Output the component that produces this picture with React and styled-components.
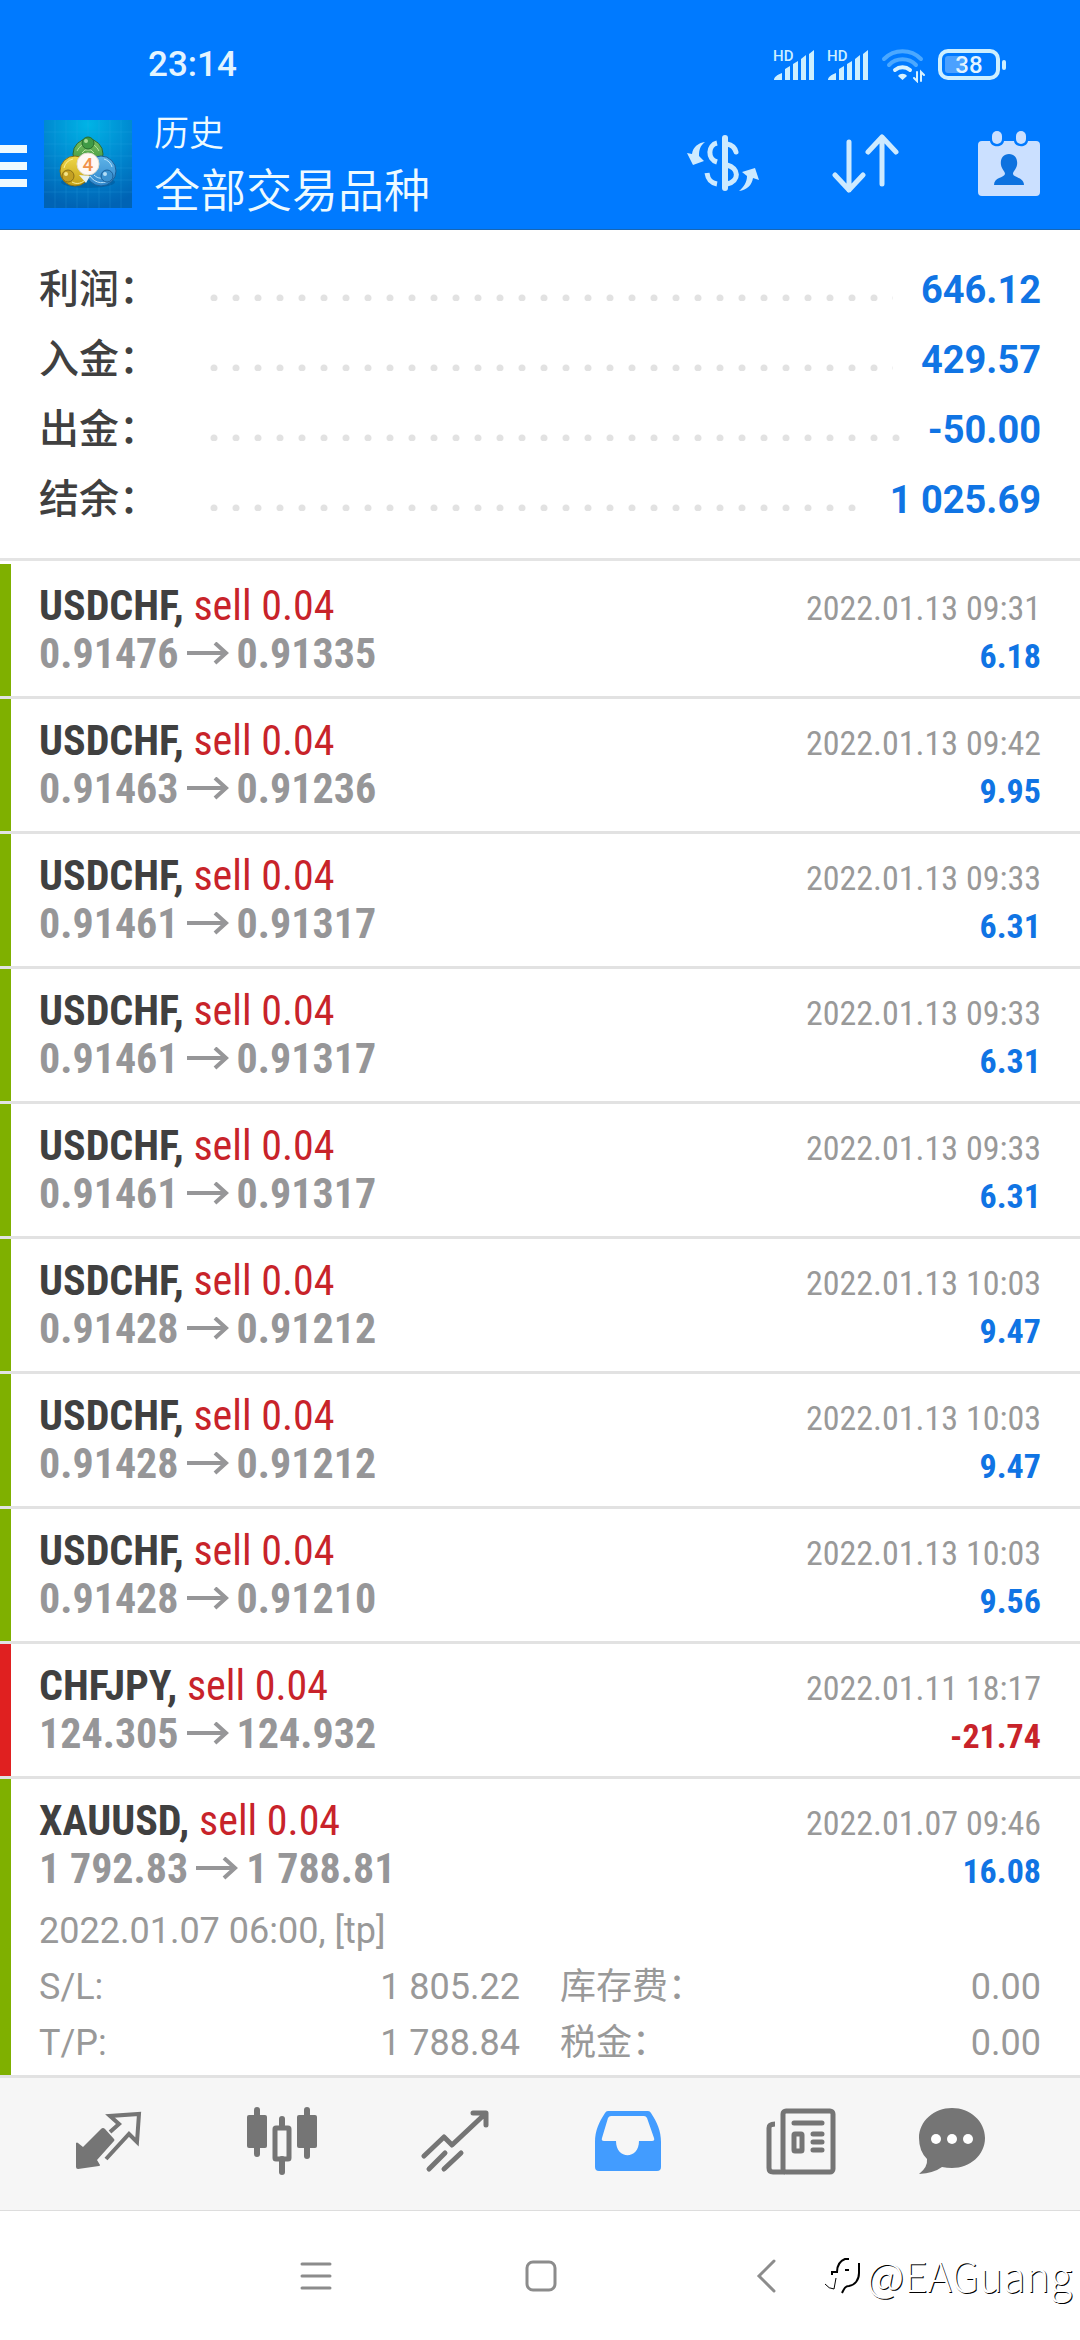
import React from "react";
import styled, { createGlobalStyle } from "styled-components";

const GlobalStyle = createGlobalStyle`
  * { box-sizing: border-box; }
  body {
    margin: 0;
    background: #ffffff;
    font-family: Roboto, "Noto Sans CJK SC", sans-serif;
    color: #404040;
  }
  button {
    border: 0;
    padding: 0;
    margin: 0;
    background: none;
    color: inherit;
    font: inherit;
    cursor: pointer;
  }
  svg { display: block; flex: none; }
  ul, dl, dd, dt, h1, p { margin: 0; padding: 0; }
  ul { list-style: none; }
`;

const condensed = `"Roboto Condensed", Roboto, sans-serif`;

const Page = styled.div`
  display: flex;
  flex-direction: column;
  width: 100%;
  background: #fff;
`;

/* ---------- header ---------- */

const Header = styled.header`
  background: #007aff;
  color: #eefaff;
  border-bottom: 1px solid #1766b5;
`;

const StatusBar = styled.div`
  display: flex;
  align-items: center;
  justify-content: space-between;
  height: 90px;
  padding: 40px 74px 0 148px;
`;

const Clock = styled.time`
  font-size: 35px;
  font-weight: 500;
  line-height: 50px;
  color: #e3f4ff;
`;

const StatusIcons = styled.div`
  display: flex;
  align-items: center;
  gap: 12px;
`;

const Toolbar = styled.div`
  display: flex;
  align-items: center;
  height: 139px;
  padding-top: 9px;
`;

const MenuButton = styled.button`
  width: 28px;
  margin-right: 16px;
`;

const Titles = styled.div`
  flex: 1;
  padding: 6px 0 0 22px;
`;

const Subtitle = styled.p`
  font-size: 35px;
  font-weight: 350;
  line-height: 48px;
`;

const Title = styled.h1`
  font-size: 46px;
  font-weight: 350;
  line-height: 64px;
`;

const ToolButton = styled.button`
  display: flex;
  justify-content: center;
  width: 143px;
  color: #cce6ff;
`;

/* ---------- summary ---------- */

const Summary = styled.dl`
  padding: 25px 39px 23px;
  border-bottom: 3px solid #e4e4e4;
`;

const SummaryRow = styled.div`
  display: flex;
  align-items: center;
  height: 70px;
`;

const SummaryLabel = styled.dt`
  width: 171px;
  font-size: 40px;
  font-weight: 500;
  line-height: 70px;
`;

const Leader = styled.span`
  flex: 1;
  height: 7px;
  margin: 15px 28px 0 0;
  background: radial-gradient(circle at 4px 4px, #e2e2e2 3px, transparent 4px) 0 0 / 22px 7px repeat-x;
`;

const SummaryValue = styled.dd`
  font-size: 38px;
  font-weight: 700;
  color: #1074e4;
`;

/* ---------- deals ---------- */

const Deals = styled.ul`
  padding-top: 3px;
`;

const Deal = styled.li`
  display: flex;
  border-bottom: 3px solid #e2e2e2;
  &::before {
    content: "";
    width: 11px;
    background: ${(p) => (p.$loss ? "#e02020" : "#7fb000")};
  }
`;

const DealBody = styled.div`
  flex: 1;
  padding: 18px 39px ${(p) => (p.$open ? 4 : 16)}px 28px;
`;

const DealTop = styled.div`
  display: flex;
  justify-content: space-between;
  font-family: ${condensed};
  line-height: 48px;
`;

const DealLine = styled.div`
  display: flex;
  align-items: center;
  gap: 8px;
  height: 48px;
  font-size: 42px;
  font-weight: 700;
  white-space: pre;
  color: ${(p) => (p.$muted ? "#969698" : "#404040")};
`;

const Side = styled.span`
  font-weight: 400;
  color: #c8232a;
`;

const DealRight = styled.div`
  padding-top: 2px;
  text-align: right;
  font-size: 34px;
`;

const DealDate = styled.div`
  color: #999999;
`;

const Profit = styled.div`
  font-weight: 700;
  color: ${(p) => (p.$loss ? "#c8232a" : "#1074e4")};
`;

const Details = styled.div`
  padding-top: 8px;
  font-size: 36px;
  font-weight: 400;
  line-height: 56px;
  color: #999999;
`;

const DetailGrid = styled.dl`
  display: grid;
  grid-template-columns: 1fr 1fr;
  column-gap: 40px;
`;

const DetailRow = styled.div`
  display: flex;
  justify-content: space-between;
  height: 56px;
`;

/* ---------- bottom bars ---------- */

const TabBar = styled.nav`
  display: grid;
  grid-template-columns: repeat(5, 173fr) 130fr;
  align-items: center;
  height: 133px;
  padding: 0 63px 6px 22px;
  background: #f6f6f6;
  border-bottom: 1px solid #dddddd;
`;

const Tab = styled.button`
  display: flex;
  justify-content: center;
  color: ${(p) => (p.$active ? "#429cff" : "#757575")};
`;

const SystemBar = styled.div`
  position: relative;
  display: flex;
  align-items: center;
  justify-content: center;
  gap: 193px;
  height: 129px;
  padding-left: 2px;
  color: #8c8c8c;
`;

const Watermark = styled.div`
  position: absolute;
  right: 8px;
  bottom: 36px;
  display: flex;
  align-items: center;
  gap: 6px;
  font-family: Roboto, "Noto Sans CJK SC", sans-serif;
  font-family: "Noto Sans CJK SC", sans-serif;
  font-size: 41px;
  font-weight: 300;
  line-height: 60px;
  color: #ffffff;
  text-shadow: 1px 1px 0 #000000;
`;

/* ---------- drawings ---------- */

const Signal = () => (
  <svg width="42" height="44" viewBox="0 -5 42 44" fill="#cdefff">
    <text x="0" y="13" fontFamily="Roboto, sans-serif" fontSize="15" fontWeight="500">HD</text>
    <path d="M1 32c0-3 3-5 8-7v7zM12 21l5-3v14h-5zM20 16l5-3v19h-5zM28 11l5-4v25h-5zM36 6l5-4v30h-5z" />
  </svg>
);

const Wifi = () => (
  <svg width="44" height="36" viewBox="0 0 44 36" fill="none" strokeLinecap="round">
    <path d="M3 12a26 26 0 0 1 37 0" stroke="#4ba8ff" strokeWidth="4" />
    <path d="M8 18a19 19 0 0 1 27 0" stroke="#4ba8ff" strokeWidth="4" />
    <path d="M14 23a12 12 0 0 1 15 0" stroke="#d8f2ff" strokeWidth="4" />
    <path d="M17 29c2-3 7-3 9 0l-4.500 4z" fill="#d8f2ff" />
    <path d="M36 25v9l-3-3M40 34v-9l3 3" stroke="#d8f2ff" strokeWidth="2" />
  </svg>
);

const Battery = () => (
  <svg width="69" height="34" viewBox="0 0 69 34">
    <rect x="3" y="3" width="58" height="27" rx="8" fill="none" stroke="#cdefff" strokeWidth="4" />
    <rect x="8" y="8" width="19" height="17" rx="3" fill="#4ba1ff" />
    <rect x="65" y="12" width="4" height="10" rx="2" fill="#cdefff" />
    <text x="32" y="25" textAnchor="middle" fontFamily="Roboto, sans-serif" fontSize="24" fontWeight="500" fill="#e3f4ff">38</text>
  </svg>
);

const MenuBars = () => (
  <svg width="28" height="48" viewBox="0 0 28 48" fill="currentColor">
    <path d="M0 5h27v8H0zM0 22h27v8H0zM0 39h27v8H0z" />
  </svg>
);

const AppLogo = () => (
  <svg width="88" height="88" viewBox="0 0 88 88">
    <defs>
      <radialGradient id="sky" cx="50%" cy="5%" r="95%">
        <stop offset="0" stopColor="#00b4e6" />
        <stop offset="0.550" stopColor="#0087cf" />
        <stop offset="1" stopColor="#0063b4" />
      </radialGradient>
      <linearGradient id="leaf" x1="0" y1="0" x2="0" y2="1">
        <stop offset="0" stopColor="#7cc262" />
        <stop offset="1" stopColor="#2f8a35" />
      </linearGradient>
      <linearGradient id="gold" x1="0" y1="0" x2="0" y2="1">
        <stop offset="0" stopColor="#f0d848" />
        <stop offset="1" stopColor="#c4a016" />
      </linearGradient>
      <linearGradient id="azure" x1="0" y1="0" x2="0" y2="1">
        <stop offset="0" stopColor="#5fb4e8" />
        <stop offset="1" stopColor="#2f86cb" />
      </linearGradient>
    </defs>
    <rect width="88" height="88" fill="url(#sky)" />
    <path d="M11 0v88M22 0v88M33 0v88M44 0v88M55 0v88M66 0v88M77 0v88M0 12h88M0 24h88M0 36h88M0 48h88M0 60h88M0 72h88" stroke="#30b0e8" strokeOpacity="0.200" />
    <ellipse cx="44" cy="62" rx="27" ry="6" fill="#004a88" opacity="0.400" />
    <circle cx="44" cy="34" r="15" fill="url(#leaf)" stroke="#2b6a30" />
    <path d="M33 31a12 12 0 0 1 22 0M38 33l3-3h6l3 3" fill="none" stroke="#b4e29c" strokeWidth="1" />
    <circle cx="57" cy="51" r="15" fill="url(#azure)" stroke="#1b5f98" />
    <path d="M46 56c5 8 16 9 21 2M60 39a12 12 0 0 1 8 8M50 55c4 4 9 4 12 1" fill="none" stroke="#b9e2fa" strokeWidth="1" />
    <circle cx="31" cy="51" r="15" fill="url(#gold)" stroke="#86701a" />
    <path d="M20 48a12 12 0 0 1 9-9M28 62c5 3 11 1 14-3" fill="none" stroke="#fbf09a" strokeWidth="1" />
    <path d="M35 55l7 8 4-7z" fill="#e9f3f4" />
    <circle cx="44" cy="23" r="6" fill="#3f9a45" stroke="#286b2c" />
    <circle cx="42" cy="21" r="2" fill="#a7dc96" />
    <circle cx="24" cy="56" r="6" fill="#c3a023" stroke="#8a7018" />
    <circle cx="22" cy="54" r="2" fill="#f5e58a" />
    <circle cx="63" cy="56" r="6" fill="#3b92d0" stroke="#1b609a" />
    <circle cx="61" cy="54" r="2" fill="#b5def6" />
    <circle cx="44" cy="44" r="11" fill="#fff8f4" stroke="#e0dcd0" />
    <text x="44" y="51" textAnchor="middle" fontFamily="Roboto, sans-serif" fontSize="19" fontWeight="500" fill="#f0924a">4</text>
  </svg>
);

const CurrencyIcon = () => (
  <svg width="74" height="58" viewBox="0 0 74 58" fill="none" stroke="#cdeaff" strokeWidth="5">
    <path d="M39 3v50" strokeWidth="6" strokeLinecap="round" />
    <path d="M31 8c-9 2-10 16 0 19" />
    <path d="M21 38c1 7 4 10 10 11" />
    <path d="M41 9c5 1 8 4 9 8" strokeLinecap="round" />
    <path d="M41 30c12 3 13 16 0 19" />
    <path d="M19 7C12 8 7 12 6 19l-5-1 6 12 11-4-5-5c0-6 1-10 6-14z" fill="#cdeaff" stroke="none" />
    <path d="M53 56c8-1 13-6 14-13l6 2-4-12-13 4 5 4c0 6-3 11-8 15z" fill="#cdeaff" stroke="none" />
  </svg>
);

const SortIcon = () => (
  <svg width="68" height="60" viewBox="0 0 68 60" fill="none" stroke="#cdeaff" strokeWidth="5" strokeLinecap="round" strokeLinejoin="round">
    <path d="M17 8v48M3 41l14 15 14-15" />
    <path d="M50 50V3M36 18L50 3l14 15" />
  </svg>
);

const CalendarIcon = () => (
  <svg width="64" height="68" viewBox="0 0 64 68" fill="#cbe0ff">
    <path d="M5 11h8c1 7 13 7 14 0h10c1 7 13 7 14 0h8q4 0 4 4v47q0 4-4 4H5q-4 0-4-4V15q0-4 4-4z" />
    <rect x="15" y="1" width="10" height="13" rx="5" />
    <rect x="39" y="1" width="10" height="13" rx="5" />
    <path fill="#0d72df" d="M32 24c6 0 9 5 8 11-1 5-4 6-4 9 1 4 11 3 11 11H17c0-8 10-7 11-11 0-3-3-4-4-9-1-6 2-11 8-11z" />
  </svg>
);

const PriceArrow = () => (
  <svg width="42" height="24" viewBox="0 0 42 24" fill="none" stroke="#969698" strokeWidth="4">
    <path d="M0 11h39M28 1l11 10-11 10" />
  </svg>
);

const QuotesIcon = () => (
  <svg width="68" height="60" viewBox="0 0 68 60">
    <path fill="currentColor" d="M28 17q1 0 2 1l9 10q1 1 0 2L22 49l3 5q0 1-1 1L3 58q-2 0-2-2V32q1-1 2 0l5 4 18-18q1-1 2-1z" />
    <path fill="none" stroke="currentColor" strokeWidth="4" d="M35 21l9-8-9-8 29-2-2 28-8-8-23 25" />
  </svg>
);

const CandlesIcon = () => (
  <svg width="70" height="70" viewBox="0 0 70 70">
    <g fill="currentColor">
      <rect x="0" y="9" width="20" height="33" rx="2" />
      <rect x="7" y="1" width="6" height="50" rx="3" />
      <rect x="50" y="9" width="20" height="33" rx="2" />
      <rect x="57" y="1" width="6" height="52" rx="3" />
      <rect x="32" y="10" width="6" height="12" rx="3" />
      <rect x="32" y="50" width="6" height="19" rx="3" />
    </g>
    <rect x="28" y="22" width="14" height="31" rx="1" fill="none" stroke="currentColor" strokeWidth="5" />
  </svg>
);

const TrendIcon = () => (
  <svg width="68" height="64" viewBox="0 0 68 64" fill="none" stroke="currentColor" strokeWidth="5" strokeLinecap="round">
    <path d="M3 47l20-19 8 8L64 5M52 4h13v12" strokeLinejoin="round" />
    <path d="M8 60l16-16M23 60l17-16" />
  </svg>
);

const InboxIcon = () => (
  <svg width="68" height="62" viewBox="0 0 68 62">
    <path fill="currentColor" fillRule="evenodd" d="M14 1h40q2 0 3 2c6 9 10 18 10 29v25q0 4-4 4H5q-4 0-4-4V32C1 21 5 12 11 3q1-2 3-2zM17 6q-2 0-3 2L8 28q-1 3 2 3h12c0 19 23 19 23 0h13q3 0 2-3L53 8q-1-2-3-2z" />
  </svg>
);

const NewsIcon = () => (
  <svg width="70" height="68" viewBox="0 0 70 68" fill="none" stroke="currentColor" strokeWidth="5">
    <rect x="17" y="4" width="50" height="61" rx="3" />
    <path d="M9 17q-6 0-6 4v40q0 4 4 4h12" />
    <path d="M28 16h28M47 27h9M47 35h9M47 43h9" strokeLinecap="round" />
    <rect x="28" y="27" width="8" height="17" rx="1" />
  </svg>
);

const ChatIcon = () => (
  <svg width="68" height="68" viewBox="0 0 68 68">
    <path fill="currentColor" d="M34 1c18 0 33 13 33 30S52 61 34 61q-5 0-10-1-8 6-23 7 9-7 8-15Q1 44 1 31C1 14 16 1 34 1z" />
    <g fill="#fff">
      <circle cx="18" cy="32" r="5" />
      <circle cx="34" cy="32" r="5" />
      <circle cx="50" cy="32" r="5" />
    </g>
  </svg>
);

const RecentsIcon = () => (
  <svg width="32" height="32" viewBox="0 0 32 32" stroke="currentColor" strokeWidth="3" strokeLinecap="round">
    <path d="M2 4h28M2 16h28M2 28h28" />
  </svg>
);

const HomeIcon = () => (
  <svg width="32" height="32" viewBox="0 0 32 32" fill="none" stroke="currentColor" strokeWidth="3">
    <rect x="2" y="2" width="28" height="28" rx="6" />
  </svg>
);

const BackIcon = () => (
  <svg width="32" height="34" viewBox="0 0 32 34" fill="none" stroke="currentColor" strokeWidth="3" strokeLinecap="round">
    <path d="M24 2L9 17l15 15" />
  </svg>
);

const WatermarkLogo = () => (
  <svg width="36" height="42" viewBox="0 0 36 42" fill="none" stroke="#000" strokeWidth="2">
    <path d="M0 31q4 5 9 5l2-11" strokeWidth="1" />
    <path d="M7 22v-3h5c0-6 3-11 8-13h4M20 17h4" />
    <path d="M34 10v10c0 7-4 12-10 13-4 0-5 3-7 7" />
  </svg>
);

/* ---------- data ---------- */

const totals = [
  ["利润：", "646.12"],
  ["入金：", "429.57"],
  ["出金：", "-50.00"],
  ["结余：", "1 025.69"],
];

const deals = [
  { symbol: "USDCHF", from: "0.91476", to: "0.91335", date: "2022.01.13 09:31", profit: "6.18" },
  { symbol: "USDCHF", from: "0.91463", to: "0.91236", date: "2022.01.13 09:42", profit: "9.95" },
  { symbol: "USDCHF", from: "0.91461", to: "0.91317", date: "2022.01.13 09:33", profit: "6.31" },
  { symbol: "USDCHF", from: "0.91461", to: "0.91317", date: "2022.01.13 09:33", profit: "6.31" },
  { symbol: "USDCHF", from: "0.91461", to: "0.91317", date: "2022.01.13 09:33", profit: "6.31" },
  { symbol: "USDCHF", from: "0.91428", to: "0.91212", date: "2022.01.13 10:03", profit: "9.47" },
  { symbol: "USDCHF", from: "0.91428", to: "0.91212", date: "2022.01.13 10:03", profit: "9.47" },
  { symbol: "USDCHF", from: "0.91428", to: "0.91210", date: "2022.01.13 10:03", profit: "9.56" },
  { symbol: "CHFJPY", from: "124.305", to: "124.932", date: "2022.01.11 18:17", profit: "-21.74" },
  {
    symbol: "XAUUSD",
    from: "1 792.83",
    to: "1 788.81",
    date: "2022.01.07 09:46",
    profit: "16.08",
    note: "2022.01.07 06:00, [tp]",
    details: [
      ["S/L:", "1 805.22"],
      ["库存费：", "0.00"],
      ["T/P:", "1 788.84"],
      ["税金：", "0.00"],
    ],
  },
];

const tabs = [
  ["行情", QuotesIcon],
  ["图表", CandlesIcon],
  ["交易", TrendIcon],
  ["历史", InboxIcon],
  ["新闻", NewsIcon],
  ["消息", ChatIcon],
];

function DealItem({ deal }) {
  const loss = deal.profit.startsWith("-");
  return (
    <Deal $loss={loss}>
      <DealBody $open={Boolean(deal.details)}>
        <DealTop>
          <div>
            <DealLine>
              <span>{deal.symbol}, <Side>sell 0.04</Side></span>
            </DealLine>
            <DealLine $muted>
              <span>{deal.from}</span>
              <PriceArrow />
              <span>{deal.to}</span>
            </DealLine>
          </div>
          <DealRight>
            <DealDate>{deal.date}</DealDate>
            <Profit $loss={loss}>{deal.profit}</Profit>
          </DealRight>
        </DealTop>
        {deal.details && (
          <Details>
            <p>{deal.note}</p>
            <DetailGrid>
              {deal.details.map(([name, value]) => (
                <DetailRow key={name}>
                  <dt>{name}</dt>
                  <dd>{value}</dd>
                </DetailRow>
              ))}
            </DetailGrid>
          </Details>
        )}
      </DealBody>
    </Deal>
  );
}

export default function App() {
  return (
    <Page>
      <GlobalStyle />
      <Header>
        <StatusBar>
          <Clock>23:14</Clock>
          <StatusIcons>
            <Signal />
            <Signal />
            <Wifi />
            <Battery />
          </StatusIcons>
        </StatusBar>
        <Toolbar>
          <MenuButton aria-label="菜单"><MenuBars /></MenuButton>
          <AppLogo />
          <Titles>
            <Subtitle>历史</Subtitle>
            <Title>全部交易品种</Title>
          </Titles>
          <ToolButton aria-label="交易品种"><CurrencyIcon /></ToolButton>
          <ToolButton aria-label="排序"><SortIcon /></ToolButton>
          <ToolButton aria-label="日期"><CalendarIcon /></ToolButton>
        </Toolbar>
      </Header>
      <main>
        <Summary>
          {totals.map(([name, value]) => (
            <SummaryRow key={name}>
              <SummaryLabel>{name}</SummaryLabel>
              <Leader />
              <SummaryValue>{value}</SummaryValue>
            </SummaryRow>
          ))}
        </Summary>
        <Deals>
          {deals.map((deal, i) => <DealItem key={i} deal={deal} />)}
        </Deals>
      </main>
      <TabBar>
        {tabs.map(([name, Icon]) => (
          <Tab key={name} aria-label={name} $active={name === "历史"}><Icon /></Tab>
        ))}
      </TabBar>
      <SystemBar>
        <button aria-label="最近任务"><RecentsIcon /></button>
        <button aria-label="主屏幕"><HomeIcon /></button>
        <button aria-label="返回"><BackIcon /></button>
        <Watermark><WatermarkLogo />@EAGuang</Watermark>
      </SystemBar>
    </Page>
  );
}
